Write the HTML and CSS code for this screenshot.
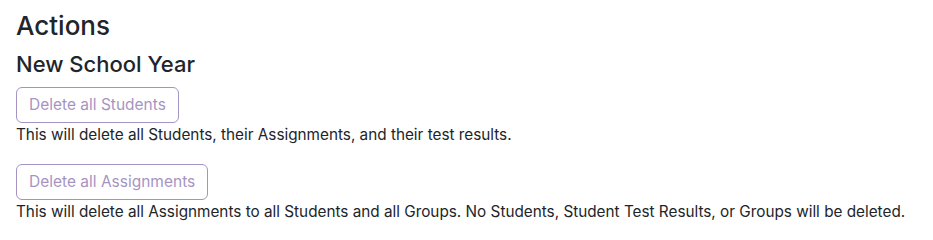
FILE: index.html
```html
<!DOCTYPE html>
<html lang="en">
<head>
    <meta charset="UTF-8">
    <meta name="viewport" content="width=device-width, initial-scale=1.0">
    <title>Actions</title>
    <link rel="stylesheet" href="styles.css">
</head>
<body>
    <div class="container">
        <h1>Actions</h1>
        <h2>New School Year</h2>

        <div class="action">
            <button type="button" class="btn-outline" disabled>Delete all Students</button>
            <p>This will delete all Students, their Assignments, and their test results.</p>
        </div>

        <div class="action">
            <button type="button" class="btn-outline" disabled>Delete all Assignments</button>
            <p>This will delete all Assignments to all Students and all Groups. No Students, Student Test Results, or Groups will be deleted.</p>
        </div>
    </div>
</body>
</html>
```

FILE: styles.css
```css
* {
    margin: 0;
    padding: 0;
    box-sizing: border-box;
}

body {
    font-family: Inter, "Noto Sans", sans-serif;
    font-size: 16px;
    line-height: 1.5;
    color: #212529;
    background: #fff;
}

.container {
    padding: 10px 16px;
}

h1 {
    font-size: 26px;
    font-weight: 500;
    line-height: 1.2;
    margin-bottom: 10px;
}

h2 {
    font-size: 22px;
    font-weight: 500;
    line-height: 1.2;
    margin-bottom: 9px;
}

.action {
    margin-bottom: 17px;
}

.btn-outline {
    font-family: inherit;
    font-size: 15.5px;
    line-height: 22px;
    padding: 6px 12px;
    background: transparent;
    color: #6b4c9a;
    border: 1px solid #6b4c9a;
    border-radius: 6px;
    opacity: 0.6;
}

.action p {
    font-size: 15.3px;
    line-height: 24px;
}
```
